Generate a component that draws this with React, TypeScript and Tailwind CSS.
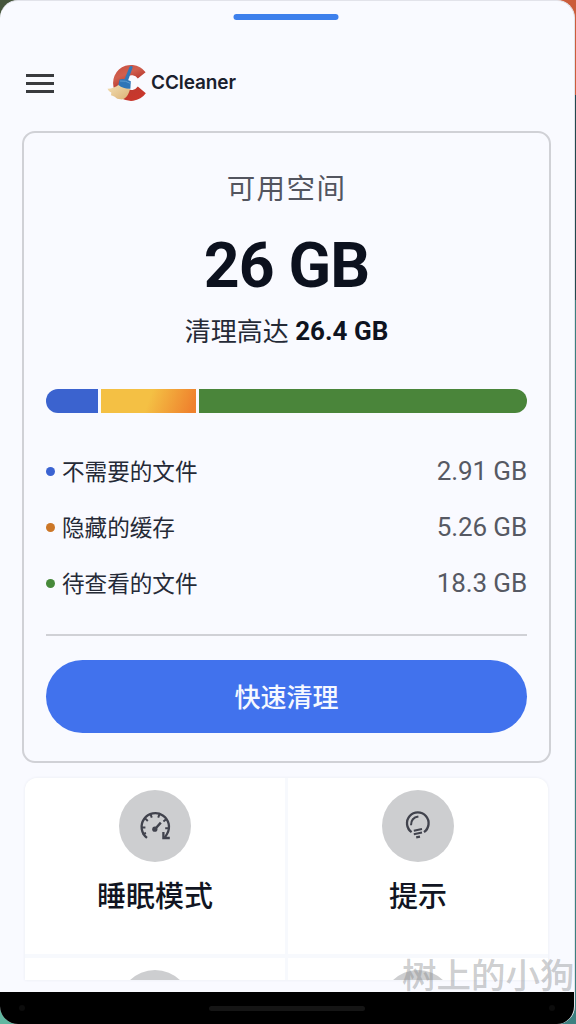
import type { ReactNode } from "react";

const files = [
  { name: "不需要的文件", size: "2.91 GB", dot: "bg-[#3b63d2]" },
  { name: "隐藏的缓存", size: "5.26 GB", dot: "bg-[#cc7728]" },
  { name: "待查看的文件", size: "18.3 GB", dot: "bg-[#47893a]" },
];

function Logo() {
  return (
    <svg width="42" height="40" viewBox="0 0 42 40" className="block">
      <defs>
        <linearGradient id="red" x1="0" y1="0" x2="0.4" y2="1">
          <stop offset="0" stopColor="#c94b3d" />
          <stop offset="0.35" stopColor="#d0604f" />
          <stop offset="0.6" stopColor="#bb3b31" />
          <stop offset="1" stopColor="#c8372c" />
        </linearGradient>
        <linearGradient id="straw" x1="0" y1="0" x2="1" y2="1">
          <stop offset="0" stopColor="#f3dfb5" />
          <stop offset="1" stopColor="#dcb376" />
        </linearGradient>
      </defs>
      <path
        d="M38.6 9.3 A18 18 0 1 0 38.8 30.2 L30.8 23.6 A7.4 7.4 0 1 1 30.8 15.6 Z"
        fill="url(#red)"
      />
      <path
        d="M12 21.5 C9 24.3 5 25.6 0.5 25.8 C1.5 28 3 29 4.3 29.5 L4 32.2 C6 32.8 7.5 33.3 8.6 34.6 L10.2 35.8 L15 36.4 C19 35.5 21.8 31.5 23 26 Z"
        fill="url(#straw)"
      />
      <path d="M22.6 3.8 Q24.2 1.9 25.8 4 L20.9 18 L17.2 17 Z" fill="#3278b8" />
      <path
        d="M12.6 16.4 Q17.5 15 23.8 18.2 L23.4 25.8 Q16.5 26.2 11.4 22 Z"
        fill="#2e75b7"
      />
      <path d="M13 18 Q18.5 17.3 23.5 20.4" stroke="#5b9bd0" strokeWidth="1" fill="none" />
    </svg>
  );
}

function GaugeIcon() {
  return (
    <svg width="36" height="36" viewBox="0 0 36 36" fill="none" stroke="#41434d" strokeWidth="2.3">
      <path d="M10 29.8 A13.7 13.7 0 1 1 30 26 L27.5 30" />
      <path d="M26.4 23.9 V30 H32.8" />
      <path d="M4.5 19.6 H8.4 M8.1 10.4 L10.8 13 M13.6 6.4 L14.8 9.7 M22.4 6.4 L21.2 9.7 M29 11.4 L26.4 13.5 M32 20.3 H28.2 M5.6 26.1 L9 25" strokeWidth="2" />
      <path d="M18.8 20.2 L23.8 14.6" strokeWidth="2.4" />
      <circle cx="17.8" cy="21.2" r="2.6" fill="#41434d" stroke="none" />
    </svg>
  );
}

function BulbIcon() {
  return (
    <svg width="36" height="36" viewBox="0 0 36 36" fill="none" stroke="#41434d" strokeWidth="2.3">
      <path d="M11.6 24.1 A10.8 10.8 0 1 1 24 24.1" />
      <path d="M11 17.2 Q11 9.8 18.4 8.6" strokeWidth="2" />
      <path d="M13.8 22.7 L22 21 M13.8 26.2 L22 24.5 M16.2 29.4 L20 28.6" strokeWidth="2.1" />
    </svg>
  );
}

function Tile({ icon, label }: { icon?: ReactNode; label?: string }) {
  return (
    <div className="flex flex-col items-center bg-white pt-3">
      <div className="flex size-[72px] shrink-0 items-center justify-center rounded-full bg-[#cdced0]">
        {icon}
      </div>
      <div className="mt-[15px] text-[29px] leading-10 font-medium text-[#111522]">{label}</div>
    </div>
  );
}

export default function App() {
  return (
    <div className="relative h-[1024px] w-[576px] overflow-hidden bg-[linear-gradient(#cb5d3b_0_95px,#22484e_95px_300px,#3c8080_300px)] font-['Roboto','Noto_Sans_CJK_SC',sans-serif]">
      <div className="absolute top-0 left-0 size-5 bg-[#46553c]" />
      <div className="absolute bottom-0 left-0 size-5 bg-[#60b7a0]" />

      <div className="relative flex h-full w-[574.5px] flex-col overflow-hidden rounded-[18px] border-t border-r border-[#e2e3ea] bg-[#f9faff]">
        <div className="mx-auto mt-[13px] h-[6px] w-[105px] shrink-0 translate-x-[-0.5px] rounded-full bg-[#3d80ec]" />

        <header className="mt-[43px] flex h-10 shrink-0 items-center pl-[26px]">
          <button className="flex w-7 flex-col gap-[5px]" aria-label="菜单">
            <span className="h-[3px] bg-[#393a3e]" />
            <span className="h-[3px] bg-[#393a3e]" />
            <span className="h-[3px] bg-[#393a3e]" />
          </button>
          <div className="ml-[53px] flex items-center">
            <Logo />
            <span className="ml-[2px] font-['Inter'] text-[19px] leading-6 font-semibold tracking-[-0.1px] text-[#1a202d]">
              CCleaner
            </span>
          </div>
        </header>

        <section className="mt-[28px] ml-[22px] flex h-[632px] w-[529px] shrink-0 flex-col rounded-[13px] border-2 border-[#d0d1d6] px-[22px]">
          <h1 className="mt-[37px] text-center text-[28.5px] leading-10 tracking-[1.4px] text-[#53555f]">
            可用空间
          </h1>
          <div className="mt-[21px] text-center text-[62.5px] leading-[70px] font-bold tracking-[-0.8px] text-[#0c111e]">
            26 GB
          </div>
          <div className="mt-[12px] text-center text-[26px] leading-9 text-[#252a37]">
            <span className="relative top-px">清理高达</span>{" "}
            <b className="font-bold text-[#0e1320]">26.4 GB</b>
          </div>
          <div className="mt-10 flex h-6 shrink-0 gap-[3px] overflow-hidden rounded-full">
            <div className="w-[52px] bg-[#3b63cf]" />
            <div className="w-[95px] bg-[linear-gradient(110deg,#f4c044_50%,#ef812d_95%)]" />
            <div className="flex-1 bg-[#4a853a]" />
          </div>
          <ul className="mt-[30px]">
            {files.map((f) => (
              <li key={f.name} className="flex h-14 items-center">
                <span className={`size-[9px] rounded-full ${f.dot}`} />
                <span className="ml-[7px] pt-[3px] text-[22.6px] text-[#252a37]">{f.name}</span>
                <span className="ml-auto text-[26px] tracking-[-0.1px] text-[#565963]">{f.size}</span>
              </li>
            ))}
          </ul>
          <div className="mt-[23px] h-[2px] shrink-0 bg-[#d0d1d6]" />
          <button className="mt-6 h-[73px] shrink-0 rounded-full bg-[#4172ed] pt-[4px] text-[26px] font-medium text-[#f5f8ff]">
            快速清理
          </button>
        </section>

        <section className="mt-[15px] ml-[25px] grid h-[202px] w-[523px] shrink-0 grid-cols-[260px_260px] grid-rows-[176px_176px] gap-x-[3px] gap-y-[4px] overflow-hidden rounded-t-[12px] bg-[#f7f9fd] shadow-[0_0_3px_#e8eaf0]">
          <Tile icon={<GaugeIcon />} label="睡眠模式" />
          <Tile icon={<BulbIcon />} label="提示" />
          <Tile />
          <Tile />
        </section>

        <div className="mt-auto flex h-8 shrink-0 items-center justify-between bg-black px-[19px]">
          <span className="size-[6px] rounded-full bg-[#0c0c0c]" />
          <span className="h-[5px] w-[156px] rounded-full bg-[#151515]" />
          <span className="size-[6px] rounded-full bg-[#0c0c0c]" />
        </div>
      </div>

      <div className="absolute top-[956px] left-[402px] text-[34.5px] leading-10 font-medium whitespace-nowrap text-[#808285]/40">
        树上的小狗
      </div>
    </div>
  );
}
